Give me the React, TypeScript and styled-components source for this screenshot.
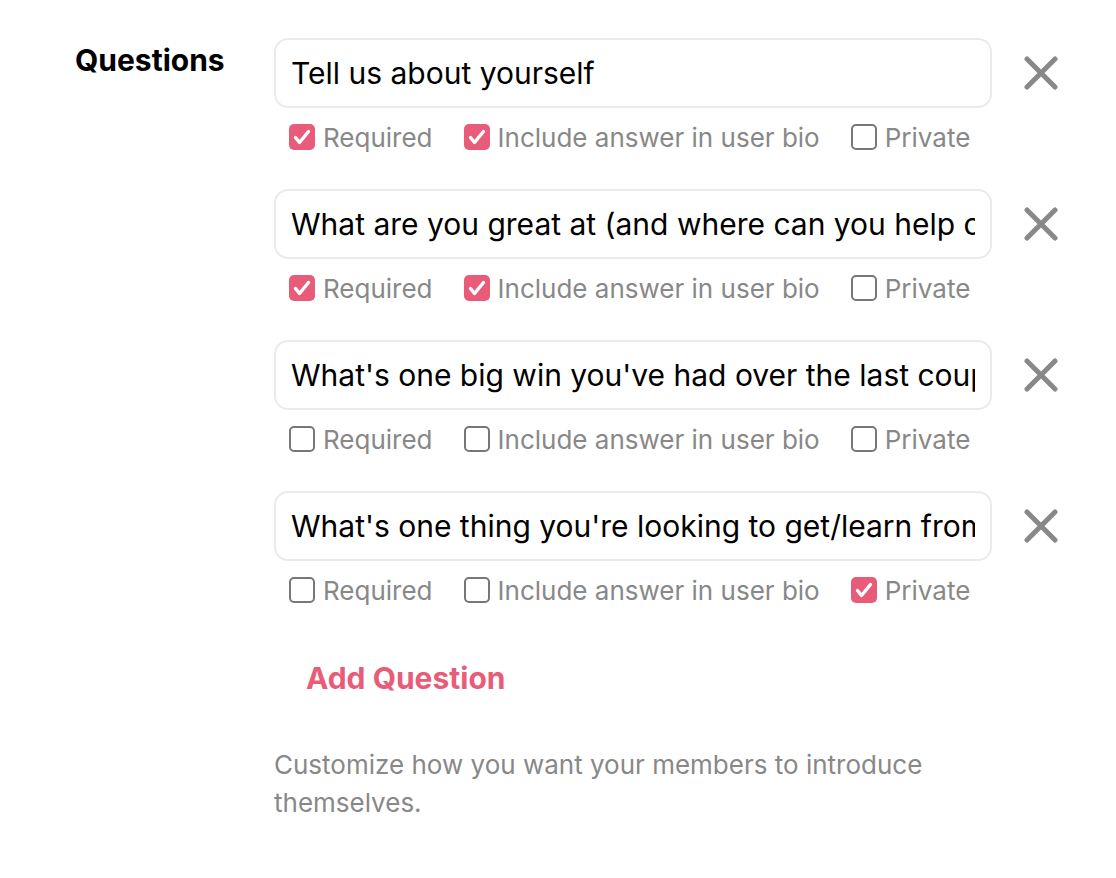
import styled, { createGlobalStyle } from 'styled-components';

const GlobalStyle = createGlobalStyle`
  body {
    margin: 0;
    background: #ffffff;
    font-family: Inter, "Noto Sans", sans-serif;
  }
`;

type Question = {
  text: string;
  required: boolean;
  bio: boolean;
  private: boolean;
};

const questions: Question[] = [
  { text: 'Tell us about yourself', required: true, bio: true, private: false },
  { text: 'What are you great at (and where can you help others)?', required: true, bio: true, private: false },
  { text: "What's one big win you've had over the last couple of months?", required: false, bio: false, private: false },
  { text: "What's one thing you're looking to get/learn from this community?", required: false, bio: false, private: true },
];

const CheckMark = () => (
  <svg width="26" height="26" viewBox="0 0 26 26" fill="none">
    <path d="M6.5 13.5 L10.5 18.5 L19.5 7.5" stroke="#fff" strokeWidth="3.4" strokeLinecap="round" strokeLinejoin="round" />
  </svg>
);

const CloseIcon = () => (
  <svg width="34" height="34" viewBox="0 0 34 34" fill="none">
    <path d="M3 3 L31 31 M31 3 L3 31" stroke="#888" strokeWidth="5" strokeLinecap="round" />
  </svg>
);

const Option = ({ label, checked }: { label: string; checked: boolean }) => (
  <OptionLabel>
    <Box $checked={checked}>{checked && <CheckMark />}</Box>
    <span>{label}</span>
  </OptionLabel>
);

export default function App() {
  return (
    <>
      <GlobalStyle />
      <Section>
        <Label>Questions</Label>
        <Content>
          <List>
            {questions.map((q) => (
              <Item key={q.text}>
                <InputRow>
                  <Input defaultValue={q.text} />
                  <RemoveButton aria-label="Remove question">
                    <CloseIcon />
                  </RemoveButton>
                </InputRow>
                <Options>
                  <Option label="Required" checked={q.required} />
                  <Option label="Include answer in user bio" checked={q.bio} />
                  <Option label="Private" checked={q.private} />
                </Options>
              </Item>
            ))}
          </List>
          <AddButton>Add Question</AddButton>
          <Help>Customize how you want your members to introduce themselves.</Help>
        </Content>
      </Section>
    </>
  );
}

const Section = styled.div`
  display: grid;
  grid-template-columns: 199px 1fr;
  padding: 38px 0 0 75px;
`;

const Label = styled.div`
  font-size: 30px;
  font-weight: 700;
  color: #000;
  padding-top: 4px;
`;

const Content = styled.div`
  display: flex;
  flex-direction: column;
`;

const List = styled.div`
  display: flex;
  flex-direction: column;
  gap: 34px;
`;

const Item = styled.div`
  display: flex;
  flex-direction: column;
`;

const InputRow = styled.div`
  display: flex;
  align-items: center;
  gap: 32px;
`;

const Input = styled.input`
  width: 718px;
  height: 70px;
  box-sizing: border-box;
  border: 2px solid #ebebeb;
  border-radius: 14px;
  padding: 0 15px;
  font-family: Inter, "Noto Sans", sans-serif;
  font-size: 30px;
  color: #000;
  outline: none;
`;

const RemoveButton = styled.button`
  border: none;
  background: none;
  padding: 0;
  display: flex;
  cursor: pointer;
`;

const Options = styled.div`
  display: flex;
  gap: 31px;
  padding: 13px 0 0 15px;
  height: 47px;
  box-sizing: border-box;
`;

const OptionLabel = styled.label`
  display: flex;
  align-items: center;
  gap: 8px;
  font-size: 26px;
  color: #888;
  height: 32px;
`;

const Box = styled.span<{ $checked: boolean }>`
  width: 26px;
  height: 26px;
  box-sizing: border-box;
  border-radius: 5px;
  display: flex;
  align-items: center;
  justify-content: center;
  background: ${(p) => (p.$checked ? '#e85c7a' : '#fff')};
  border: ${(p) => (p.$checked ? 'none' : '2px solid #777')};
`;

const AddButton = styled.button`
  align-self: flex-start;
  border: none;
  background: none;
  padding: 0;
  height: 36px;
  margin: 52px 0 0 32px;
  font-family: Inter, "Noto Sans", sans-serif;
  font-size: 30px;
  font-weight: 700;
  color: #e85c7a;
  cursor: pointer;
`;

const Help = styled.p`
  margin: 50px 0 0;
  width: 680px;
  font-size: 26px;
  line-height: 38px;
  color: #888;
`;
